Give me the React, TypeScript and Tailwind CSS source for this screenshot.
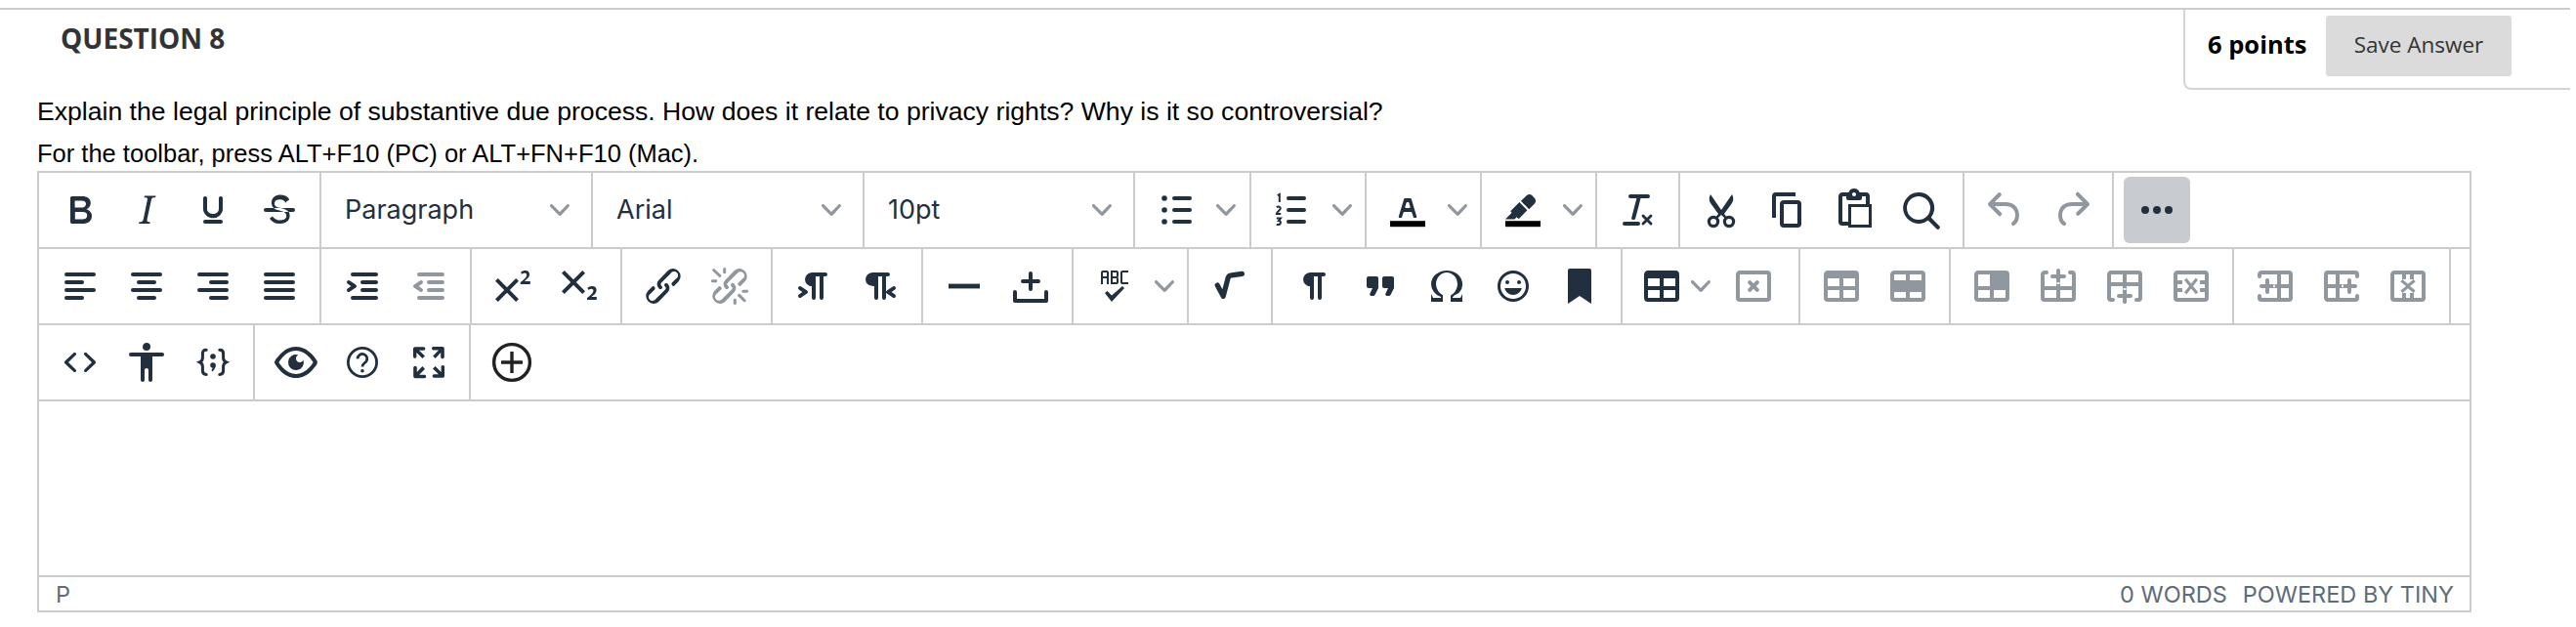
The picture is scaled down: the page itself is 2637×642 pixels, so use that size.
import React from "react";

const P: Record<string, string> = {
  bold: "M7.8 19c-.3 0-.5 0-.6-.2l-.2-.5V5.7c0-.2 0-.4.2-.5l.6-.2h5c1.5 0 2.7.3 3.5 1 .7.6 1.1 1.4 1.1 2.5a3 3 0 01-.6 1.9c-.4.6-1 1-1.6 1.2.4.1.9.3 1.3.6s.8.7 1 1.2c.4.4.5 1 .5 1.6 0 1.3-.4 2.3-1.3 3-.8.7-2.1 1-3.8 1H7.8zm5-8.3c.6 0 1.2-.1 1.6-.5.4-.3.6-.7.6-1.3 0-1.1-.8-1.7-2.3-1.7H9.3v3.5h3.4zm.5 6c.7 0 1.3-.1 1.7-.4.4-.4.6-.9.6-1.5s-.2-1-.7-1.4c-.4-.3-1-.4-2-.4H9.4v3.8h4z",
  italic: "M16.7 4.7l-.1.9h-.3c-.6 0-1 0-1.4.3-.3.3-.4.6-.5 1.1l-2.1 9.8v.6c0 .5.4.8 1.4.8h.2l-.2.8H8l.2-.8h.2c1.1 0 1.8-.5 2-1.5l2-9.8.1-.5c0-.6-.4-.8-1.4-.8h-.3l.2-.9h5.8z",
  underline: "M16 5c.6 0 1 .4 1 1v5.500a4 4 0 01-.4 1.800l-1 1.400a5.300 5.300 0 01-5.500 1 5 5 0 01-1.600-1c-.5-.4-.8-.9-1.100-1.400a4 4 0 01-.4-1.800V6c0-.6.4-1 1-1s1 .4 1 1v5.500c0 .3 0 .6.2 1l.6.7a3.300 3.300 0 002.200.8 3.400 3.400 0 002.200-.8c.3-.2.4-.5.6-.8l.2-.9V6c0-.6.4-1 1-1zM8 17h8c.6 0 1 .4 1 1s-.4 1-1 1H8a1 1 0 010-2z",
  strike: "M15.6 8.5c-.5-.7-1-1.1-1.3-1.3-.6-.4-1.3-.6-2-.6-2.7 0-2.8 1.7-2.8 2.1 0 1.6 1.8 2 3.2 2.3 4.4.9 4.6 2.8 4.6 3.9 0 1.4-.7 4.1-5 4.1A6.2 6.2 0 017 16.4l1.5-1.1c.4.6 1.6 2 3.7 2 1.6 0 2.5-.4 3-1 .3-.4.4-.9.4-1.4 0-.8-.4-2-4-2.8-3-.6-3.6-2.5-3.6-3.9 0-2.7 2.2-4 4.6-4 1.6 0 2.8.6 3.6 1.3.3.3.7.7.9 1.2l-1.6 1zM5 11h14a1 1 0 010 2H5a1 1 0 010-2z",
  alignL: "M5 5h14a1 1 0 010 2H5a1 1 0 110-2zm0 4h8a1 1 0 010 2H5a1 1 0 110-2zm0 8h8a1 1 0 010 2H5a1 1 0 010-2zm0-4h14a1 1 0 010 2H5a1 1 0 010-2z",
  alignC: "M5 5h14a1 1 0 010 2H5a1 1 0 110-2zm3 4h8a1 1 0 010 2H8a1 1 0 110-2zm0 8h8a1 1 0 010 2H8a1 1 0 010-2zm-3-4h14a1 1 0 010 2H5a1 1 0 010-2z",
  alignR: "M5 5h14a1 1 0 010 2H5a1 1 0 110-2zm6 4h8a1 1 0 010 2h-8a1 1 0 010-2zm0 8h8a1 1 0 010 2h-8a1 1 0 010-2zm-6-4h14a1 1 0 010 2H5a1 1 0 010-2z",
  alignJ: "M5 5h14a1 1 0 010 2H5a1 1 0 110-2zm0 4h14a1 1 0 010 2H5a1 1 0 110-2zm0 4h14a1 1 0 010 2H5a1 1 0 010-2zm0 4h14a1 1 0 010 2H5a1 1 0 010-2z",
  indent: "M7 5h12a1 1 0 010 2H7a1 1 0 110-2zm5 4h7a1 1 0 010 2h-7a1 1 0 010-2zm0 4h7a1 1 0 010 2h-7a1 1 0 010-2zm-5 4h12a1 1 0 010 2H7a1 1 0 010-2zm-2.6-3.8L6.2 12l-1.8-1.2a1 1 0 011.2-1.6l3 2a1 1 0 010 1.6l-3 2a1 1 0 11-1.2-1.6z",
  outdent: "M7 5h12a1 1 0 010 2H7a1 1 0 110-2zm5 4h7a1 1 0 010 2h-7a1 1 0 010-2zm0 4h7a1 1 0 010 2h-7a1 1 0 010-2zm-5 4h12a1 1 0 010 2H7a1 1 0 010-2zm1.6-3.8a1 1 0 01-1.2 1.6l-3-2a1 1 0 010-1.6l3-2a1 1 0 011.2 1.6L6.8 12l1.8 1.2z",
  sup: "M15 9.4L10.4 14l4.6 4.6-1.4 1.4L9 15.4 4.4 20 3 18.6 7.6 14 3 9.4 4.4 8 9 12.6 13.6 8 15 9.4zm5.9 1.6h-5v-1l1-.8 1.7-1.6c.3-.5.5-.9.5-1.3 0-.3 0-.5-.2-.7-.2-.2-.5-.3-.9-.3l-.8.2-.7.4-.4-1.2c.2-.2.5-.4 1-.5.3-.2.8-.2 1.2-.2.7 0 1.2.2 1.6.5.4.4.6.9.6 1.5s-.2 1.1-.6 1.6l-1.3 1.3-.6.6h2.9v1.5z",
  sub: "M10.4 10l4.6 4.6-1.4 1.4L9 11.4 4.4 16 3 14.6 7.6 10 3 5.4 4.4 4 9 8.6 13.6 4 15 5.4 10.4 10zM21 19h-5v-1l1-.8 1.7-1.6c.3-.4.5-.8.5-1.2 0-.3 0-.6-.2-.7-.2-.2-.5-.3-.9-.3a2 2 0 00-.8.2l-.7.3-.4-1.1 1-.6 1.2-.2c.8 0 1.4.2 1.8.5.4.4.6.9.6 1.5s-.2 1.1-.5 1.6a8 8 0 01-1.4 1.3l-.6.6h2.6V19z",
  link: "M6.2 12.3a1 1 0 011.4 1.4l-2 2a2 2 0 102.6 2.8l4.8-4.8a1 1 0 000-1.4 1 1 0 111.4-1.3 2.9 2.9 0 010 4L9.6 20a3.9 3.9 0 01-5.5-5.5l2-2zm11.6-.6a1 1 0 01-1.4-1.4l2-2a2 2 0 10-2.6-2.8L11 10.3a1 1 0 000 1.4A1 1 0 119.6 13a2.9 2.9 0 010-4L14.4 4a3.9 3.9 0 015.5 5.5l-2 2z",
  unlink: "M6.2 12.3a1 1 0 011.4 1.4l-2.1 2a2 2 0 102.7 2.8l4.8-4.8a1 1 0 000-1.4 1 1 0 111.4-1.3 2.9 2.9 0 010 4L9.6 20a3.9 3.9 0 01-5.5-5.5l2-2zm11.6-.6a1 1 0 01-1.4-1.4l2.1-2a2 2 0 10-2.7-2.8L11 10.3a1 1 0 000 1.4A1 1 0 119.6 13a2.9 2.9 0 010-4L14.4 4a3.9 3.9 0 015.5 5.5l-2 2zM7.6 6.3a.8.8 0 01-1 1.1L3.3 4.2a.7.7 0 111-1l3.2 3.1zM5.1 8.6a.8.8 0 010 1.5H3a.8.8 0 010-1.5H5zm5-3.5a.8.8 0 01-1.5 0V3a.8.8 0 011.5 0v2zm6 11.8a.8.8 0 011-1l3.2 3.2a.8.8 0 01-1 1L16 17zm-2.2 2a.8.8 0 011.5 0V21a.8.8 0 01-1.5 0V19zm5-3.5a.7.7 0 110-1.5H21a.8.8 0 010 1.5h-2z",
  ltr: "M11 5h7a1 1 0 010 2h-1v11a1 1 0 01-2 0V7h-2v11a1 1 0 01-2 0v-6c-.5 0-1 0-1.4-.3A3.4 3.4 0 017.8 10a3.3 3.3 0 010-2.8 3.4 3.4 0 011.8-1.8L11 5zM4.4 16.2L6.2 15l-1.8-1.2a1 1 0 011.2-1.6l3 2a1 1 0 010 1.6l-3 2a1 1 0 11-1.2-1.6z",
  rtl: "M8 5h8a1 1 0 010 2h-1v11a1 1 0 01-2 0V7h-2v11a1 1 0 01-2 0v-6c-.5 0-1 0-1.4-.3A3.4 3.4 0 014.8 10a3.3 3.3 0 010-2.8 3.4 3.4 0 011.8-1.8L8 5zm11.6 11.2a1 1 0 01-1.2 1.6l-3-2a1 1 0 010-1.6l3-2a1 1 0 011.2 1.6L17.8 15l1.8 1.2z",
  hr: "M4 10.8h16v2.4H4z",
  insert: "M11 8.5H8a1 1 0 000 2h3v3a1 1 0 002 0v-3h3a1 1 0 000-2h-3v-3a1 1 0 00-2 0v3zM21 15v4.5a1 1 0 01-1 1H4a1 1 0 01-1-1V15a1 1 0 012 0v3.5h14V15a1 1 0 012 0z",
  spell: "M6 8v3H5V5c0-.3.1-.5.3-.7.2-.2.4-.3.7-.3h2c.3 0 .5.1.7.3.2.2.3.4.3.7v6H8V8H6zm0-3v2h2V5H6zm13 0h-3v5h3v1h-3a1 1 0 01-.7-.3 1 1 0 01-.3-.7V5c0-.3.1-.5.3-.7.2-.2.4-.3.7-.3h3v1zm-5 1.5l-.1.7c-.1.2-.3.3-.6.3.3 0 .5.1.6.3l.1.7V10c0 .3-.1.5-.3.7a1 1 0 01-.7.3h-3V4h3c.3 0 .5.1.7.3.2.2.3.4.3.7v1.5zM13 10V8h-2v2h2zm0-3V5h-2v2h2zm3 5l1 1-6.5 7L7 15.5l1.3-1 2.2 2.2L16 12z",
  para: "M10 5h7a1 1 0 010 2h-1v11a1 1 0 01-2 0V7h-2v11a1 1 0 01-2 0v-6c-.5 0-1 0-1.4-.3A3.4 3.4 0 016.8 10a3.3 3.3 0 010-2.8 3.4 3.4 0 011.8-1.8L10 5z",
  quote: "M7.5 17h.9c.4 0 .7-.2.9-.6L11 13V8c0-.6-.4-1-1-1H6a1 1 0 00-1 1v4c0 .6.4 1 1 1h2l-1.3 2.7a1 1 0 00.8 1.3zm8 0h.9c.4 0 .7-.2.9-.6L19 13V8c0-.6-.4-1-1-1h-4a1 1 0 00-1 1v4c0 .6.4 1 1 1h2l-1.3 2.7a1 1 0 00.8 1.3z",
  omega: "M15 18h4l1-2v4h-6v-3.3l1.4-1a6 6 0 001.8-2.9 6.3 6.3 0 00-.1-4.1 5.8 5.8 0 00-3-3.2c-.6-.3-1.3-.5-2.1-.5a5.1 5.1 0 00-3.9 1.8 6.3 6.3 0 00-1.3 6 6.2 6.2 0 001.8 2.8l1.4 1V20H4v-4l1 2h4v-.5l-2-1L5.4 15A6.5 6.5 0 014 11c0-1 .2-1.9.6-2.7A7 7 0 016.3 6C7.1 5.4 8 5 9 4.5c1-.3 2-.5 3-.5s2 .2 3 .5c1 .4 1.9.9 2.7 1.5a7 7 0 011.7 2.3 6.3 6.3 0 01-.8 6.7l-.6.6-2 1-1 1v.4z",
  emoji: "M9 11c.6 0 1-.4 1-1s-.4-1-1-1a1 1 0 00-1 1c0 .6.4 1 1 1zm6 0c.6 0 1-.4 1-1s-.4-1-1-1a1 1 0 00-1 1c0 .6.4 1 1 1zm-3 5.5c2.14 0 3.92-1.5 4.38-3.5H7.62c.46 2 2.24 3.5 4.38 3.5zM12 4a8 8 0 100 16 8 8 0 000-16zm0 14.5a6.5 6.5 0 110-13 6.5 6.5 0 010 13z",
  bookmark: "M6 4v17l6-4 6 4V4c0-.6-.4-1-1-1H7a1 1 0 00-1 1z",
  listBull: "M11 5h8a1 1 0 010 2h-8a1 1 0 010-2zm0 6h8a1 1 0 010 2h-8a1 1 0 010-2zm0 6h8a1 1 0 010 2h-8a1 1 0 010-2zM6 4.6a1.4 1.4 0 110 2.8 1.4 1.4 0 010-2.8zm0 6a1.4 1.4 0 110 2.8 1.4 1.4 0 010-2.8zm0 6a1.4 1.4 0 110 2.8 1.4 1.4 0 010-2.8z",
  listNum: "M10 17h8a1 1 0 010 2h-8a1 1 0 010-2zm0-6h8a1 1 0 010 2h-8a1 1 0 010-2zm0-6h8a1 1 0 010 2h-8a1 1 0 110-2z",
  color: "M8.7 16h-.8a.5.5 0 01-.5-.6l2.7-9c.1-.3.3-.4.5-.4h2.8c.2 0 .4.1.5.4l2.7 9a.5.5 0 01-.5.6h-.8a.5.5 0 01-.4-.4l-.7-2.2c0-.3-.3-.4-.5-.4h-3.4c-.2 0-.4.1-.5.4l-.7 2.2c0 .3-.2.4-.4.4zm2.6-7.6l-.6 2a.5.5 0 00.5.6h1.6a.5.5 0 00.5-.6l-.6-2c0-.3-.3-.4-.5-.4h-.4c-.2 0-.4.1-.5.4z",
  hilite: "M7.7 16.7H3l3.3-3.3-.7-.8L10.2 8l4 4.1-4 4.2c-.2.2-.6.2-.8 0l-.6-.7-1.1 1.1zm5-7.5L11 7.4l3-2.9a2 2 0 012.6 0L18 6c.7.7.7 2 0 2.7l-2.9 2.9-1.8-1.8-.5-.6",
  removeFmt: "M13.2 6a1 1 0 010 .2l-2.6 10a1 1 0 01-1 .8h-.2a.8.8 0 01-.8-1l2.6-10H8a1 1 0 110-2h9a1 1 0 010 2h-3.8zM5 18h7a1 1 0 010 2H5a1 1 0 010-2zm13 1.5L16.5 18 15 19.5a.7.7 0 01-1-1l1.5-1.5-1.5-1.5a.7.7 0 011-1l1.5 1.5 1.5-1.5a.7.7 0 011 1L17.5 17l1.5 1.5a.7.7 0 01-1 1z",
  copy: "M16 3H6a2 2 0 00-2 2v11h2V5h10V3zm1 4a2 2 0 012 2v10a2 2 0 01-2 2h-7a2 2 0 01-2-2V9c0-1.2.9-2 2-2h7zm0 12V9h-7v10h7z",
  paste: "M18 9V5h-2v1c0 .6-.4 1-1 1H9a1 1 0 01-1-1V5H6v13h3V9h9zM9 20H6a2 2 0 01-2-2V5c0-1.1.9-2 2-2h3.2A3 3 0 0112 1a3 3 0 012.8 2H18a2 2 0 012 2v4h1v12H9v-1zm1.5-9.5v9h9v-9h-9zM12 3a1 1 0 00-1 1c0 .5.4 1 1 1s1-.5 1-1-.4-1-1-1z",
  search: "M16 17.3a8 8 0 111.4-1.4l4.3 4.4a1 1 0 01-1.4 1.4l-4.4-4.3zm-5-.3a6 6 0 100-12 6 6 0 000 12z",
  undo: "M6.4 8H12c3.7 0 6.2 2 6.8 5.1.6 2.7-.4 5.6-2.3 6.8a1 1 0 01-1-1.8c1.1-.6 1.8-2.7 1.4-4.6-.5-2.1-2.1-3.5-4.9-3.5H6.4l3.3 3.3a1 1 0 11-1.4 1.4l-5-5a1 1 0 010-1.4l5-5a1 1 0 011.4 1.4L6.4 8z",
  redo: "M17.6 10H12c-2.8 0-4.4 1.4-4.9 3.5-.4 2 .3 4 1.4 4.6a1 1 0 11-1 1.8c-2-1.2-2.9-4.1-2.3-6.8.6-3 3-5.1 6.8-5.1h5.6l-3.3-3.3a1 1 0 111.4-1.4l5 5a1 1 0 010 1.4l-5 5a1 1 0 01-1.4-1.4l3.3-3.3z",
  more: "M6 10a2 2 0 100 4 2 2 0 000-4zm12 0a2 2 0 100 4 2 2 0 000-4zm-6 0a2 2 0 100 4 2 2 0 000-4z",
  table: "M19 4a2 2 0 012 2v12a2 2 0 01-2 2H5a2 2 0 01-2-2V6c0-1.1.9-2 2-2h14zM5 14v4h6v-4H5zm14 0h-6v4h6v-4zm0-6h-6v4h6V8zM5 12h6V8H5v4z",
  tableDel: "M19 4a2 2 0 012 2v12a2 2 0 01-2 2H5a2 2 0 01-2-2V6c0-1.1.9-2 2-2h14zM5 6v12h14V6H5zm8.4 6l1.3-1.3a1 1 0 00-1.4-1.4L12 10.6l-1.3-1.3a1 1 0 00-1.4 1.4l1.3 1.3-1.3 1.3a1 1 0 001.4 1.4l1.3-1.3 1.3 1.3a1 1 0 001.4-1.4L13.4 12z",
  rowFill: "M19 4a2 2 0 012 2v12a2 2 0 01-2 2H5a2 2 0 01-2-2V6c0-1.1.9-2 2-2h14zM5 15v3h6v-3H5zm14 0h-6v3h6v-3zm0-9h-6v3h6V6zM5 9h6V6H5v3z",
  cellFill: "M19 4a2 2 0 012 2v12a2 2 0 01-2 2H5a2 2 0 01-2-2V6c0-1.1.9-2 2-2h14zM5 14v4h6v-4H5zm14 0h-6v4h6v-4zM5 12h6V6H5v6z",
  rowAbove: "M6 4a1 1 0 110 2H5v6h6v-1a1 1 0 012 0v1h6V6h-1a1 1 0 010-2h1a2 2 0 012 2v12a2 2 0 01-2 2H5a2 2 0 01-2-2V6c0-1.1.9-2 2-2h1zm5 10H5v4h6v-4zm8 0h-6v4h6v-4zM12 3c.5 0 1 .4 1 1v2h2c.5 0 1 .4 1 1s-.5 1-1 1h-2v2c0 .5-.4 1-1 1s-1-.4-1-1V8H9c-.5 0-1-.4-1-1s.5-1 1-1h2V4c0-.5.4-1 1-1z",
  rowBelow: "M12 13c.5 0 1 .4 1 1v2h2c.5 0 1 .4 1 1s-.5 1-1 1h-2v2c0 .5-.4 1-1 1s-1-.4-1-1v-2H9c-.5 0-1-.4-1-1s.5-1 1-1h2v-2c0-.6.4-1 1-1zm7-9a2 2 0 012 2v12a2 2 0 01-2 2h-1a1 1 0 010-2h1v-6h-6v1a1 1 0 01-2 0v-1H5v6h1a1 1 0 010 2H5a2 2 0 01-2-2V6c0-1.1.9-2 2-2h14zm-8 2H5v4h6V6zm8 0h-6v4h6V6z",
  rowDel: "M19 4a2 2 0 012 2v12a2 2 0 01-2 2H5a2 2 0 01-2-2V6c0-1.1.9-2 2-2h14zm0 2H5v3h2.5v2H5v2h2.5v2H5v3h14v-3h-2.5v-2H19v-2h-2.5V9H19V6zm-4.7 1.8l1.2 1L13 12l2.6 3.1-1.2 1-2.4-2.8-2.3 2.8-1.2-1L11 12 8.5 8.9l1.2-1 2.3 2.8 2.3-2.8z",
  colBefore: "M5 4h14a2 2 0 012 2v12a2 2 0 01-2 2H5a2 2 0 01-2-2v-1a1 1 0 012 0v1h8v-5h-1a1 1 0 010-2h1V6H5v1a1 1 0 01-2 0V6c0-1.1.9-2 2-2zm10 2v5h4V6h-4zm0 7v5h4v-5h-4zM8 8c.6 0 1 .4 1 1v2h2a1 1 0 010 2H9v2a1 1 0 01-2 0v-2H5a1 1 0 010-2h2V9c0-.6.4-1 1-1z",
  colAfter: "M19 4H5a2 2 0 00-2 2v12c0 1.1.9 2 2 2h14a2 2 0 002-2v-1a1 1 0 00-2 0v1h-8v-5h1a1 1 0 000-2h-1V6h8v1a1 1 0 002 0V6a2 2 0 00-2-2zM9 6v5H5V6h4zm0 7v5H5v-5h4zm7-5c-.6 0-1 .4-1 1v2h-2a1 1 0 000 2h2v2a1 1 0 002 0v-2h2a1 1 0 000-2h-2V9c0-.6-.4-1-1-1z",
  colDel: "M19 4a2 2 0 012 2v12a2 2 0 01-2 2H5a2 2 0 01-2-2V6c0-1.1.9-2 2-2h14zM5 6v12h4v-2.5h2V18h2v-2.5h2V18h4V6h-4v2.5h-2V6h-2v2.5H9V6H5zm9.8 2.5l1 1.2L13 12l2.8 2.3-1 1.2L12 13.1l-2.8 2.4-1-1.2L11 12 8.2 9.7l1-1.2L12 10.9l2.8-2.4z",
  source: "M9.8 15.7c.3.3.3.8 0 1-.3.4-.9.4-1.2 0l-4.4-4.1a.8.8 0 010-1.2l4.4-4.2c.3-.3.9-.3 1.2 0 .3.3.3.8 0 1.1L6 12l3.8 3.7zm4.4 0L18 12l-3.8-3.7a.8.8 0 010-1.1c.3-.3.9-.3 1.2 0l4.4 4.2c.3.3.3.9 0 1.2l-4.4 4.1c-.3.4-.9.4-1.2 0a.8.8 0 010-1z",
  a11y: "M12 2a2 2 0 012 2 2 2 0 01-2 2 2 2 0 01-2-2c0-1.1.9-2 2-2zm8 7h-5v12c0 .6-.4 1-1 1a1 1 0 01-1-1v-5c0-.6-.4-1-1-1a1 1 0 00-1 1v5c0 .6-.4 1-1 1a1 1 0 01-1-1V9H4a1 1 0 110-2h16c.6 0 1 .4 1 1s-.4 1-1 1z",
  eye: "M3.5 12.5c.5.8 1.1 1.6 1.8 2.3 2 2 4.2 3.2 6.7 3.2s4.7-1.2 6.7-3.2a16.2 16.2 0 002.1-2.8 15.7 15.7 0 00-2.1-2.8c-2-2-4.2-3.2-6.7-3.2a9.3 9.3 0 00-6.7 3.2A16.2 16.2 0 003.2 12c0 .2.2.3.3.5zm-2.4-1l.7-1.2L4 7.8C6.2 5.4 8.9 4 12 4c3 0 5.8 1.4 8.1 3.8a18.2 18.2 0 012.8 3.7v1l-.7 1.2-2.1 2.5c-2.3 2.4-5 3.8-8.1 3.8-3 0-5.8-1.4-8.1-3.8a18.2 18.2 0 01-2.8-3.7 1 1 0 010-1zm12-3.3a2 2 0 102.7 2.6 4 4 0 11-2.6-2.6z",
  fullscreen: "M15.3 10l-1.2-1.3 2.9-3h-2.3a.9.9 0 110-1.7H19c.5 0 .9.4.9.9v4.4a.9.9 0 11-1.8 0V7l-2.8 3zm0 4l3 3v-2.3a.9.9 0 111.7 0V19c0 .5-.4.9-.9.9h-4.4a.9.9 0 110-1.8H17l-3-2.9 1.3-1.2zM10 15.4l-2.9 3h2.3a.9.9 0 110 1.7H5a.9.9 0 01-.9-.9v-4.4a.9.9 0 111.8 0V17l2.8-3 1.2 1.2zM8.7 10L5.7 7v2.3a.9.9 0 01-1.7 0V5c0-.5.4-.9.9-.9h4.4a.9.9 0 010 1.8H7l3 2.9-1.3 1.2z",
};

function Svg({ children, dim }: { children: React.ReactNode; dim?: boolean }) {
  return (
    <svg viewBox="0 0 24 24" className={dim ? "w-[48px] h-[48px] fill-[#91979f] text-[#91979f]" : "w-[48px] h-[48px] fill-[#222f3e] text-[#222f3e]"}>
      {children}
    </svg>
  );
}

function Ic({ n, dim, bar }: { n: string; dim?: boolean; bar?: boolean }) {
  return (
    <Svg dim={dim}>
      {bar && <rect x="3" y="17.6" width="18" height="3" fill="#000" />}
      <path fillRule="evenodd" d={P[n]} />
    </Svg>
  );
}

function Box({ children, active }: { children: React.ReactNode; active?: boolean }) {
  return (
    <div className={active ? "w-[68px] h-[68px] rounded-[6px] bg-[#c8cbcf] flex items-center justify-center shrink-0" : "w-[68px] h-[68px] flex items-center justify-center shrink-0"}>
      {children}
    </div>
  );
}

function Btn({ n, dim }: { n: string; dim?: boolean }) {
  return (
    <Box>
      <Ic n={n} dim={dim} />
    </Box>
  );
}

function Chev() {
  return (
    <svg viewBox="0 0 10 10" className="w-[20px] h-[20px] fill-[#91979f]">
      <path d="M8.7 2.2c.3-.3.8-.3 1 0 .4.4.4.9 0 1.2L5.7 7.8c-.3.3-.9.3-1.2 0L.2 3.4a.8.8 0 010-1.2c.3-.3.8-.3 1.1 0L5 6l3.7-3.8z" />
    </svg>
  );
}

function Split({ children }: { children: React.ReactNode }) {
  return (
    <div className="flex items-center">
      <Box>{children}</Box>
      <div className="w-[34px] flex justify-center">
        <Chev />
      </div>
    </div>
  );
}

function Select({ label }: { label: string }) {
  return (
    <div className="w-[262px] h-[68px] flex items-center justify-between pl-[16px] pr-[14px] text-[27px] text-[#222f3e]">
      <span>{label}</span>
      <Chev />
    </div>
  );
}

function Group({ className, children }: { className: string; children: React.ReactNode }) {
  return <div className={"h-full flex items-center shrink-0 border-r-2 border-[#cccccc] " + className}>{children}</div>;
}

export default function App() {
  return (
    <div className="w-[2631px] h-[642px] bg-white pt-[8px] font-['Liberation_Sans',sans-serif] text-black">
      <div className="border-t-2 border-[#cccccc] h-[84px] flex justify-between items-start">
        <h2 className="pl-[62px] pt-[10px] font-['Open_Sans',sans-serif] font-bold text-[28px] leading-[38px] text-[#333333]">QUESTION 8</h2>
        <div className="w-[396px] h-[82px] border-l-2 border-b-2 border-[#d4d4d4] rounded-bl-[8px] pl-[23px] pt-[6px] flex items-start">
          <span className="w-[121px] h-[58px] flex items-center font-['Open_Sans',sans-serif] font-bold text-[25.500px] text-black">6 points</span>
          <button className="w-[190px] h-[62px] pb-[2px] bg-[#dbdbdb] rounded-[3px] font-['Open_Sans',sans-serif] text-[22.500px] text-[#333333]">Save Answer</button>
        </div>
      </div>
      <div className="pl-[38px]">
        <p className="pt-[2px] text-[26.600px] leading-[40px]">Explain the legal principle of substantive due process. How does it relate to privacy rights? Why is it so controversial?</p>
        <p className="mt-[5px] text-[25.500px] leading-[36px]">For the toolbar, press ALT+F10 (PC) or ALT+FN+F10 (Mac).</p>
        <div className="w-[2492px] border-2 border-[#cccccc] font-['Inter',sans-serif]">
          <div className="h-[78px] border-b-2 border-[#cccccc] flex">
            <Group className="w-[289px] px-[8px]"><Btn n="bold" /><Btn n="italic" /><Btn n="underline" /><Btn n="strike" /></Group>
            <Group className="w-[278px] px-[8px]"><Select label="Paragraph" /></Group>
            <Group className="w-[278px] px-[8px]"><Select label="Arial" /></Group>
            <Group className="w-[277px] px-[8px]"><Select label="10pt" /></Group>
            <Group className="w-[119px] px-[8px]"><Split><Ic n="listBull" /></Split></Group>
            <Group className="w-[118px] px-[8px]">
              <Split>
                <Svg>
                  <path d={P.listNum} />
                  <path d="M4.4 4.600l1-.6v4M3.900 10.600c.8-.6 2-.3 2 .6 0 .8-2 1.600-2 2.800h2.200M3.900 16.200h2.100l-1 1.300c1.400 0 1.400 2.300-1.100 2" fill="none" stroke="#222f3e" strokeWidth="1" />
                </Svg>
              </Split>
            </Group>
            <Group className="w-[118px] px-[8px]"><Split><Ic n="color" bar /></Split></Group>
            <Group className="w-[118px] px-[8px]"><Split><Ic n="hilite" bar /></Split></Group>
            <Group className="w-[85px] px-[8px]"><Btn n="removeFmt" /></Group>
            <Group className="w-[291px] px-[8px]">
              <Box>
                <Svg>
                  <path d="M6.500 4l5.500 8 5.500-8c.8 1.600.9 3 0 4.500l-4 5.500 1.800 2.300h-1.500L12 14.500l-1.800 1.800H8.700l1.800-2.300-4-5.500c-.9-1.500-.8-2.900 0-4.500z" />
                  <circle cx="8" cy="18" r="2.300" fill="none" stroke="#222f3e" strokeWidth="1.600" />
                  <circle cx="16" cy="18" r="2.300" fill="none" stroke="#222f3e" strokeWidth="1.600" />
                </Svg>
              </Box>
              <Btn n="copy" /><Btn n="paste" /><Btn n="search" />
            </Group>
            <Group className="w-[153px] px-[8px]"><Btn n="undo" dim /><Btn n="redo" dim /></Group>
            <div className="h-full flex items-center pl-[10px]">
              <Box active><Ic n="more" /></Box>
            </div>
          </div>
          <div className="h-[78px] border-b-2 border-[#cccccc] flex">
            <Group className="w-[289px] px-[8px]"><Btn n="alignL" /><Btn n="alignC" /><Btn n="alignR" /><Btn n="alignJ" /></Group>
            <Group className="w-[154px] px-[8px]"><Btn n="indent" /><Btn n="outdent" dim /></Group>
            <Group className="w-[154px] px-[8px]"><Btn n="sup" /><Btn n="sub" /></Group>
            <Group className="w-[154px] px-[8px]"><Btn n="link" /><Btn n="unlink" dim /></Group>
            <Group className="w-[154px] px-[8px]"><Btn n="ltr" /><Btn n="rtl" /></Group>
            <Group className="w-[154px] px-[8px]"><Btn n="hr" /><Btn n="insert" /></Group>
            <Group className="w-[118px] px-[8px]"><Split><Ic n="spell" /></Split></Group>
            <Group className="w-[86px] px-[8px]">
              <Box>
                <Svg>
                  <path d="M5.600 11.500l3 5.700 2.400-9.200c.2-1 .8-1.500 1.800-1.600l5.400-.7" fill="none" stroke="#222f3e" strokeWidth="2.600" strokeLinecap="round" strokeLinejoin="round" />
                </Svg>
              </Box>
            </Group>
            <Group className="w-[358px] px-[8px]"><Btn n="para" /><Btn n="quote" /><Btn n="omega" /><Btn n="emoji" /><Btn n="bookmark" /></Group>
            <Group className="w-[182px] pl-[6px]">
              <Box><Ic n="table" /></Box>
              <div className="w-[26px] -ml-[4px] flex justify-start"><Chev /></div>
              <div className="ml-[4px]"><Btn n="tableDel" dim /></div>
            </Group>
            <Group className="w-[154px] px-[8px]"><Btn n="table" dim /><Btn n="rowFill" dim /></Group>
            <Group className="w-[290px] px-[8px]"><Btn n="cellFill" dim /><Btn n="rowAbove" dim /><Btn n="rowBelow" dim /><Btn n="rowDel" dim /></Group>
            <Group className="w-[222px] px-[8px]"><Btn n="colBefore" dim /><Btn n="colAfter" dim /><Btn n="colDel" dim /></Group>
          </div>
          <div className="h-[78px] border-b-2 border-[#cccccc] flex">
            <Group className="w-[221px] px-[8px]">
              <Btn n="source" /><Btn n="a11y" />
              <Box>
                <Svg>
                  <path d="M8.600 5.600c-1.400 0-1.900.7-1.900 1.900v2.200c0 1-.4 1.700-1.500 2.200 1.100.5 1.500 1.200 1.500 2.200v2.200c0 1.200.5 1.900 1.900 1.900M15.400 5.600c1.400 0 1.900.7 1.900 1.900v2.200c0 1 .4 1.700 1.500 2.200-1.100.5-1.500 1.200-1.500 2.200v2.200c0 1.200-.5 1.900-1.900 1.900" fill="none" stroke="#222f3e" strokeWidth="1.500" strokeLinecap="round" />
                  <circle cx="12" cy="9" r="1.400" />
                  <circle cx="12" cy="13.500" r="1.400" />
                  <path d="M13.300 13.500c0 1.500-.6 2.600-1.700 3.200l-.4-.7c.4-.4.6-.8.6-1.300z" />
                </Svg>
              </Box>
            </Group>
            <Group className="w-[221px] px-[8px]">
              <Btn n="eye" />
              <Box>
                <Svg>
                  <circle cx="12" cy="12" r="7.300" fill="none" stroke="#222f3e" strokeWidth="1.400" />
                  <path d="M9.600 10.200a2.400 2.400 0 114.200 1.500c-.8.8-1.800 1.100-1.800 2.500" fill="none" stroke="#222f3e" strokeWidth="1.400" />
                  <circle cx="12" cy="16.400" r=".9" />
                </Svg>
              </Box>
              <Btn n="fullscreen" />
            </Group>
            <div className="h-full flex items-center pl-[8px]">
              <Box>
                <Svg>
                  <circle cx="12" cy="12" r="9.200" fill="none" stroke="#222222" strokeWidth="1.700" />
                  <path d="M12 6.500v11M6.500 12h11" fill="none" stroke="#222222" strokeWidth="1.700" />
                </Svg>
              </Box>
            </div>
          </div>
          <div className="h-[178px]" />
          <div className="h-[36px] border-t-2 border-[#cccccc] flex items-center justify-between pl-[17px] pr-[16px] pt-[2px] text-[23.500px] text-[#5d6b7b]">
            <span>P</span>
            <div className="flex gap-[16px]">
              <span>0 WORDS</span>
              <span>POWERED BY TINY</span>
            </div>
          </div>
        </div>
      </div>
    </div>
  );
}
